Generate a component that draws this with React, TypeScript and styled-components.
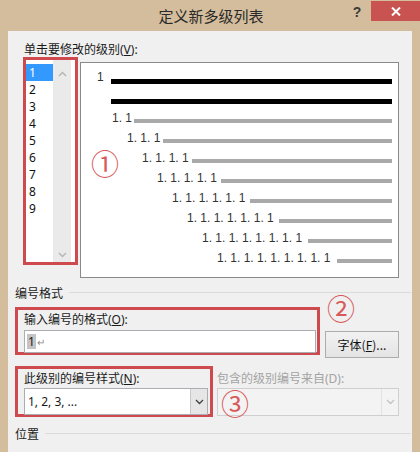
import React from 'react';
import styled, { createGlobalStyle } from 'styled-components';

const GlobalStyle = createGlobalStyle`
  html, body {
    margin: 0;
    padding: 0;
    overflow: hidden;
    background: #d4bd9c;
  }
  #root {
    width: 420px;
    height: 452px;
  }
`;

const RED = '#cf4a4f';
const UI_FONT = `"Noto Sans", "Noto Sans CJK SC", sans-serif`;
const CJK_FONT = `"Noto Sans CJK SC", sans-serif`;

const Window = styled.div`
  width: 420px;
  height: 452px;
  display: flex;
  flex-direction: column;
  background: #d4bd9c;
  font-family: ${UI_FONT};
  font-size: 12px;
  color: #1a1a1a;
  overflow: hidden;
`;

const TitleBar = styled.div`
  height: 31px;
  flex: 0 0 31px;
  display: flex;
  align-items: flex-start;
`;

const TitleSide = styled.div`
  flex: 1 1 0;
  display: flex;
  justify-content: flex-end;
  align-items: flex-start;
`;

const Title = styled.div`
  font-family: ${CJK_FONT};
  font-size: 15px;
  line-height: 31px;
  color: #2a2a2a;
  padding-left: 2px;
`;

const HelpButton = styled.div`
  width: 28px;
  height: 24px;
  line-height: 24px;
  text-align: center;
  font-family: "Liberation Sans", sans-serif;
  font-weight: bold;
  font-size: 14px;
  color: #3a3a3a;
`;

const CloseButton = styled.div`
  width: 49px;
  height: 20px;
  margin-top: 1px;
  background: #c85351;
  display: flex;
  align-items: center;
  justify-content: center;
`;

const Panel = styled.div`
  flex: 1;
  margin: 0 8px;
  background: #f0f0f0;
  padding: 11px 13px 0 7px;
  display: flex;
  flex-direction: column;
  overflow: hidden;
`;

const TopSection = styled.div`
  margin-left: 8px;
  display: flex;
  flex-direction: column;
`;

const TopLabel = styled.div`
  height: 15px;
  line-height: 15px;
  padding-left: 1px;
`;

const LevelArea = styled.div`
  display: flex;
  align-items: flex-start;
`;

const AnnotFrame = styled.div<{ $width: number }>`
  width: ${(p) => p.$width}px;
  box-sizing: border-box;
  border: 3px solid ${RED};
`;

const ListFrame = styled(AnnotFrame)`
  height: 208px;
  display: flex;
  background: #fff;
`;

const ListItems = styled.div`
  flex: 1;
  padding-top: 4px;
`;

const ListItem = styled.div<{ $selected?: boolean }>`
  height: 17px;
  line-height: 17px;
  padding-left: 3px;
  font-size: 12px;
  background: ${(p) => (p.$selected ? '#3399ff' : 'transparent')};
  color: ${(p) => (p.$selected ? '#fff' : '#111')};
`;

const ScrollBar = styled.div`
  width: 18px;
  margin-right: 4px;
  background: #eaeaea;
  display: flex;
  flex-direction: column;
  justify-content: space-between;
  align-items: center;
  padding: 11px 0 4px;
  box-sizing: border-box;
`;

const Preview = styled.div`
  position: relative;
  margin: 5px 0 0 2px;
  width: 319px;
  height: 216px;
  box-sizing: border-box;
  border: 1px solid #8a8a8a;
  background: #fff;
  padding: 2px 6px 0 0;
`;

const PreviewRow = styled.div<{ $indent: number }>`
  height: 20px;
  display: flex;
  align-items: flex-end;
  padding-left: ${(p) => p.$indent}px;
`;

const PreviewLabel = styled.span<{ $width: number; $drop: number }>`
  flex: 0 0 ${(p) => p.$width}px;
  font-family: "Liberation Sans", sans-serif;
  font-size: 12px;
  line-height: 12px;
  color: #333;
  white-space: nowrap;
  margin-bottom: ${(p) => p.$drop}px;
`;

const PreviewBar = styled.div<{ $dark?: boolean }>`
  flex: 1;
  height: ${(p) => (p.$dark ? 5 : 4)}px;
  margin-bottom: ${(p) => (p.$dark ? 1 : 2)}px;
  background: ${(p) => (p.$dark ? '#000' : '#a9a9a9')};
`;

const Mark = styled.span<{ $left: number; $top: number }>`
  position: absolute;
  left: ${(p) => p.$left}px;
  top: ${(p) => p.$top}px;
  font-family: ${CJK_FONT};
  font-size: 28px;
  line-height: 24px;
  color: #d85a5a;
  pointer-events: none;
`;

const Heading = styled.div<{ $gap: number }>`
  display: flex;
  align-items: center;
  height: 16px;
  margin-top: ${(p) => p.$gap}px;
  gap: 6px;
  font-family: ${CJK_FONT};
  font-size: 12px;
  color: #1a1a1a;
`;

const Rule = styled.div`
  flex: 1;
  height: 1px;
  background: #dadada;
  margin-right: -12px;
`;

const FormatRow = styled.div`
  display: flex;
  gap: 5px;
  margin-top: 7px;
  align-items: flex-start;
`;

const FieldFrame = styled(AnnotFrame)<{ $padRight: number }>`
  padding: 0 ${(p) => p.$padRight}px 0 6px;
`;

const FieldLabel = styled.div<{ $h: number; $muted?: boolean }>`
  height: ${(p) => p.$h}px;
  line-height: ${(p) => p.$h}px;
  color: ${(p) => (p.$muted ? '#a3a3a3' : '#1a1a1a')};
  white-space: nowrap;
`;

const TextInput = styled.div`
  height: 23px;
  margin-bottom: -1px;
  box-sizing: border-box;
  border: 1px solid #abadb3;
  background: #fff;
  display: flex;
  align-items: center;
  padding-left: 2px;
  font-size: 12px;
`;

const Highlight = styled.span`
  background: #c4c4c4;
  padding: 0 1px;
  line-height: 15px;
`;

const ReturnMark = styled.span`
  color: #8c8c8c;
  font-size: 10px;
  margin-left: 1px;
`;

const ButtonCol = styled.div`
  position: relative;
  flex: 1;
  display: flex;
  flex-direction: column;
  align-items: flex-end;
  padding-top: 24px;
`;

const Button = styled.div`
  width: 74px;
  height: 27px;
  box-sizing: border-box;
  border: 1px solid #acacac;
  background: linear-gradient(#f2f2f2, #e4e4e4);
  display: flex;
  align-items: center;
  justify-content: center;
  font-family: ${CJK_FONT};
  font-size: 12px;
  color: #111;
`;

const StyleRow = styled.div`
  display: flex;
  gap: 4px;
  margin-top: 8px;
  align-items: flex-start;
`;

const Select = styled.div<{ $disabled?: boolean; $h: number }>`
  height: ${(p) => p.$h}px;
  box-sizing: border-box;
  border: 1px solid ${(p) => (p.$disabled ? '#cfcfcf' : '#abadb3')};
  background: ${(p) => (p.$disabled ? '#f3f3f3' : '#fff')};
  display: flex;
  align-items: stretch;
`;

const SelectText = styled.div`
  flex: 1;
  display: flex;
  align-items: center;
  padding-left: 3px;
  font-size: 12px;
`;

const SelectArrow = styled.div<{ $disabled?: boolean }>`
  width: 16px;
  display: flex;
  align-items: center;
  justify-content: center;
  background: ${(p) => (p.$disabled ? 'transparent' : '#e6e6e6')};
  border-left: 1px solid ${(p) => (p.$disabled ? '#e2e2e2' : '#c9c9c9')};
`;

const FieldFrameTight = styled(FieldFrame)`
  & > ${Select} {
    margin-bottom: -1px;
  }
`;

const RightCol = styled.div`
  position: relative;
  flex: 1;
  padding-top: 3px;
  display: flex;
  flex-direction: column;
`;

const BottomRow = styled.div`
  display: flex;
  align-items: flex-start;
  margin-top: 12px;
  font-family: ${CJK_FONT};
  color: #1a1a1a;
`;

const SmallField = styled.div<{ $left: number; $width: number }>`
  margin-left: ${(p) => p.$left}px;
  width: ${(p) => p.$width}px;
  height: 22px;
  box-sizing: border-box;
  border: 1px solid #abadb3;
  background: #fff;
`;

const Chevron = ({ up, color }: { up?: boolean; color: string }) => (
  <svg width="9" height="6" viewBox="0 0 9 6">
    <path
      d={up ? 'M1 5 L4.5 1.5 L8 5' : 'M1 1 L4.5 4.5 L8 1'}
      fill="none"
      stroke={color}
      strokeWidth="1.4"
    />
  </svg>
);

const levels = [2, 3, 4, 5, 6, 7, 8, 9];

const levelLabel = (n: number) => Array(n).fill('1').join('. ');

export default function App() {
  return (
    <>
      <GlobalStyle />
      <Window>
        <TitleBar>
          <TitleSide />
          <Title>定义新多级列表</Title>
          <TitleSide>
            <HelpButton>?</HelpButton>
            <CloseButton>
              <svg width="10" height="9" viewBox="0 0 10 9">
                <path d="M1 0.5 L9 8.5 M9 0.5 L1 8.5" stroke="#fff" strokeWidth="2" />
              </svg>
            </CloseButton>
          </TitleSide>
        </TitleBar>

        <Panel>
          <TopSection>
            <TopLabel>
              单击要修改的级别(<u>V</u>):
            </TopLabel>
            <LevelArea>
              <ListFrame $width={55}>
                <ListItems>
                  {[1, 2, 3, 4, 5, 6, 7, 8, 9].map((n) => (
                    <ListItem key={n} $selected={n === 1}>
                      {n}
                    </ListItem>
                  ))}
                </ListItems>
                <ScrollBar>
                  <Chevron up color="#b5b5b5" />
                  <Chevron color="#b5b5b5" />
                </ScrollBar>
              </ListFrame>

              <Preview>
                <PreviewRow $indent={16}>
                  <PreviewLabel $width={14} $drop={2}>1</PreviewLabel>
                  <PreviewBar $dark />
                </PreviewRow>
                <PreviewRow $indent={30}>
                  <PreviewBar $dark />
                </PreviewRow>
                {levels.map((n) => (
                  <PreviewRow key={n} $indent={16 + 15 * (n - 1)}>
                    <PreviewLabel $width={14 * (n - 1) + 8} $drop={1}>
                      {levelLabel(n)}
                    </PreviewLabel>
                    <PreviewBar />
                  </PreviewRow>
                ))}
                <Mark $left={10} $top={88}>①</Mark>
              </Preview>
            </LevelArea>
          </TopSection>

          <Heading $gap={6}>
            编号格式
            <Rule />
          </Heading>

          <FormatRow>
            <FieldFrame $width={305} $padRight={1}>
              <FieldLabel $h={20}>
                输入编号的格式(<u>O</u>):
              </FieldLabel>
              <TextInput>
                <Highlight>1</Highlight>
                <ReturnMark>↵</ReturnMark>
              </TextInput>
            </FieldFrame>
            <ButtonCol>
              <Mark $left={2} $top={-11}>②</Mark>
              <Button>
                字体(<u>F</u>)...
              </Button>
            </ButtonCol>
          </FormatRow>

          <StyleRow>
            <FieldFrameTight $width={198} $padRight={2}>
              <FieldLabel $h={19}>
                此级别的编号样式(<u>N</u>):
              </FieldLabel>
              <Select $h={27}>
                <SelectText>1, 2, 3, ...</SelectText>
                <SelectArrow>
                  <Chevron color="#444" />
                </SelectArrow>
              </Select>
            </FieldFrameTight>
            <RightCol>
              <FieldLabel $h={19} $muted>
                包含的级别编号来自(D):
              </FieldLabel>
              <Select $h={28} $disabled>
                <SelectText />
                <SelectArrow $disabled>
                  <Chevron color="#c4c4c4" />
                </SelectArrow>
              </Select>
              <Mark $left={4} $top={25}>③</Mark>
            </RightCol>
          </StyleRow>

          <Heading $gap={8}>
            位置
            <Rule />
          </Heading>

          <BottomRow>
            <SmallField $left={110} $width={91} />
            <SmallField $left={89} $width={95} />
          </BottomRow>
        </Panel>
      </Window>
    </>
  );
}
